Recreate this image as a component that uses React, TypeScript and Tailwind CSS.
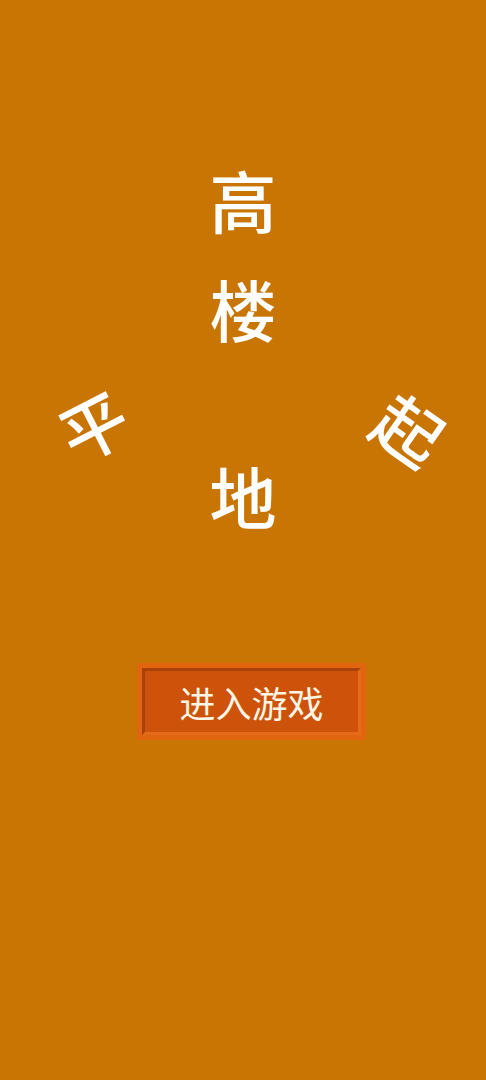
export default function App() {
  const glyph =
    "text-[67px] leading-none font-medium text-white [font-family:'Noto_Sans_CJK_SC','Noto_Sans',sans-serif]"

  return (
    <div className="relative min-h-[1080px] w-full overflow-hidden bg-[#c87503] [font-family:'Noto_Sans_CJK_SC','Noto_Sans',sans-serif]">
      <div className="flex flex-col items-center pt-[165px]">
        <span className={`${glyph} h-[67px]`}>高</span>
        <span className={`${glyph} mt-[42px] h-[67px]`}>楼</span>
        <span className={`${glyph} mt-[120px] h-[67px]`}>地</span>

        <button className="ml-[17px] mt-[135px] h-[77px] w-[229px] bg-[#e1650f] p-[5px]">
          <div className="flex h-full w-full items-center justify-center border-[3px] border-t-[#a9420a] border-l-[#a9420a] border-b-[#e56a1a] border-r-[#e56a1a] bg-[#cd520a]">
            <span className="text-[36px] leading-none text-[#fff6e6]">进入游戏</span>
          </div>
        </button>
      </div>

      <span className={`${glyph} absolute left-[59px] top-[390px] -rotate-[27deg]`}>平</span>
      <span className={`${glyph} absolute left-[377px] top-[394px] rotate-[35deg]`}>起</span>
    </div>
  )
}
